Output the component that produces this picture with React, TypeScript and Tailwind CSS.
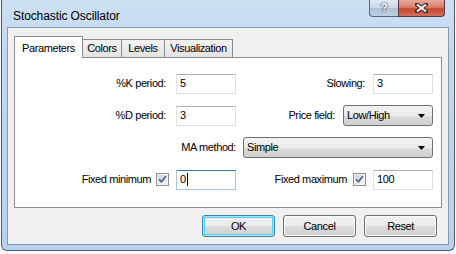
import React from "react";

const ui = "font-['Liberation_Sans',Arial,sans-serif] text-[11px] tracking-[-0.4px] text-black";

const btnFace =
  "bg-[linear-gradient(to_bottom,#f2f2f2_0%,#ebebeb_50%,#dddddd_51%,#cfcfcf_100%)]";

function TextBox({ value, focused }: { value: string; focused?: boolean }) {
  return (
    <div
      className={
        "flex h-[20px] w-[60px] items-center border bg-white pl-[3px] " +
        (focused
          ? "border-[#a4c9e3] border-t-[#3d7bad]"
          : "border-[#dbdfe6] border-l-[#e2e3ea] border-t-[#abadb3]")
      }
    >
      <span>{value}</span>
      {focused && <span className="ml-px h-[13px] w-px bg-black" />}
    </div>
  );
}

function DropList({ value, className }: { value: string; className: string }) {
  return (
    <div
      className={`flex h-[21px] items-center justify-between rounded-[3px] border border-[#707070] pl-[3px] pr-[7px] ${btnFace} ${className}`}
    >
      <span>{value}</span>
      <svg width="7" height="4" viewBox="0 0 7 4">
        <path d="M0 0h7L3.5 4z" fill="#000" />
      </svg>
    </div>
  );
}

function Check() {
  return (
    <svg width="13" height="13" viewBox="0 0 13 13" className="shrink-0">
      <defs>
        <linearGradient id="cb" x1="0" y1="0" x2="1" y2="1">
          <stop offset="0" stopColor="#cbcfd5" />
          <stop offset="1" stopColor="#f6f6f6" />
        </linearGradient>
      </defs>
      <rect x="0.5" y="0.5" width="12" height="12" fill="#f4f4f4" stroke="#8e8f8f" />
      <rect x="2" y="2" width="9" height="9" fill="url(#cb)" />
      <path d="M3.2 6.4l2.2 2.4 4.4-5.6" fill="none" stroke="#4a5f97" strokeWidth="1.7" />
    </svg>
  );
}

function Button({ label, primary }: { label: string; primary?: boolean }) {
  return (
    <div
      className={
        `flex h-[22px] w-[73px] items-center justify-center rounded-[3px] border ${btnFace} ` +
        (primary
          ? "border-[#3c7fb1] shadow-[inset_0_0_0_1px_#b7e3f7,inset_0_0_0_2px_#48d2f9]"
          : "border-[#707070] shadow-[inset_0_0_0_1px_#fbfbfb]")
      }
    >
      {label}
    </div>
  );
}

const tabs = [
  { label: "Colors", w: "w-[40px]" },
  { label: "Levels", w: "w-[44px]" },
  { label: "Visualization", w: "w-[69px]" },
];

export default function App() {
  return (
    <div className={`h-[254px] w-[456px] overflow-hidden bg-[#f7f8fa] ${ui}`}>
      <div className="ml-px flex h-[251px] w-[454px] flex-col rounded-b-[6px] border border-t-0 border-[#4f5d6e] bg-[linear-gradient(to_bottom,#cde0f4_0%,#c2d8f0_20%,#b9d1ec_100%)] px-[5px] pb-[5px]">
        {/* title bar */}
        <div className="flex h-[27px] shrink-0 items-start">
          <div className="pl-[6px] pt-[7px] text-[12px] tracking-[-0.1px]">Stochastic Oscillator</div>
          <div className="ml-auto mr-[4px] flex">
            <div className="flex h-[17px] w-[29px] items-center justify-center rounded-bl-[4px] border border-t-0 border-r-0 border-[#55677e] bg-[linear-gradient(to_bottom,#dfe8f3_0%,#c9d6e6_50%,#adc0d6_51%,#bcd0e6_100%)] text-[13px] font-bold text-white [text-shadow:0_0_1px_#2e3b4c,0_0_1px_#2e3b4c,0_0_1px_#2e3b4c]">
              ?
            </div>
            <div className="flex h-[17px] w-[47px] items-center justify-center rounded-br-[4px] border border-t-0 border-[#55374a] bg-[linear-gradient(to_bottom,#e6a99c_0%,#d8806f_45%,#c5472f_55%,#d2705b_100%)]">
              <svg width="13" height="10" viewBox="0 0 13 10">
                <path d="M2 1.5l9 7M11 1.5l-9 7" stroke="#3b2420" strokeWidth="4" strokeLinecap="square" />
                <path d="M2 1.5l9 7M11 1.5l-9 7" stroke="#fff" strokeWidth="2.2" />
              </svg>
            </div>
          </div>
        </div>

        {/* client area */}
        <div className="flex flex-1 flex-col border border-[#8799ae] bg-[#f0f0f0] px-[6px] pt-[8px]">
          <div className="flex h-[21px] items-end">
            <div className="relative z-10 -mb-px flex h-[22px] w-[69px] items-start justify-center border border-b-0 border-[#898c95] bg-white pt-[3px]">
              Parameters
            </div>
            {tabs.map((t) => (
              <div
                key={t.label}
                className={`-ml-px flex h-[18px] ${t.w} items-center justify-center border border-b-0 border-[#898c95] bg-[linear-gradient(to_bottom,#f2f2f2,#e3e3e3)] first:ml-0`}
              >
                {t.label}
              </div>
            ))}
          </div>

          <div className="flex h-[151px] flex-col gap-[11px] border border-[#898c95] bg-white pr-[8px] pt-[15px]">
            <div className="flex h-[21px] items-center">
              <div className="flex w-[221px] items-center justify-end gap-[10px]">
                <span>%K period:</span>
                <TextBox value="5" />
              </div>
              <div className="flex flex-1 items-center justify-end gap-[8px]">
                <span>Slowing:</span>
                <TextBox value="3" />
              </div>
            </div>
            <div className="flex h-[21px] items-center">
              <div className="flex w-[221px] items-center justify-end gap-[10px]">
                <span>%D period:</span>
                <TextBox value="3" />
              </div>
              <div className="flex flex-1 items-center justify-end gap-[8px]">
                <span>Price field:</span>
                <DropList value="Low/High" className="w-[90px]" />
              </div>
            </div>
            <div className="flex h-[21px] items-center">
              <div className="w-[221px] text-right">MA method:</div>
              <DropList value="Simple" className="ml-[7px] flex-1" />
            </div>
            <div className="flex h-[21px] items-center">
              <div className="flex w-[221px] items-center justify-end">
                <span className="mr-[5px]">Fixed minimum</span>
                <Check />
                <span className="ml-[7px]">
                  <TextBox value="0" focused />
                </span>
              </div>
              <div className="flex flex-1 items-center justify-end">
                <span className="mr-[6px]">Fixed maximum</span>
                <Check />
                <span className="ml-[7px]">
                  <TextBox value="100" />
                </span>
              </div>
            </div>
          </div>

          <div className="mt-[7px] flex justify-end gap-[8px] pr-[5px]">
            <Button label="OK" primary />
            <Button label="Cancel" />
            <Button label="Reset" />
          </div>
        </div>
      </div>
    </div>
  );
}
